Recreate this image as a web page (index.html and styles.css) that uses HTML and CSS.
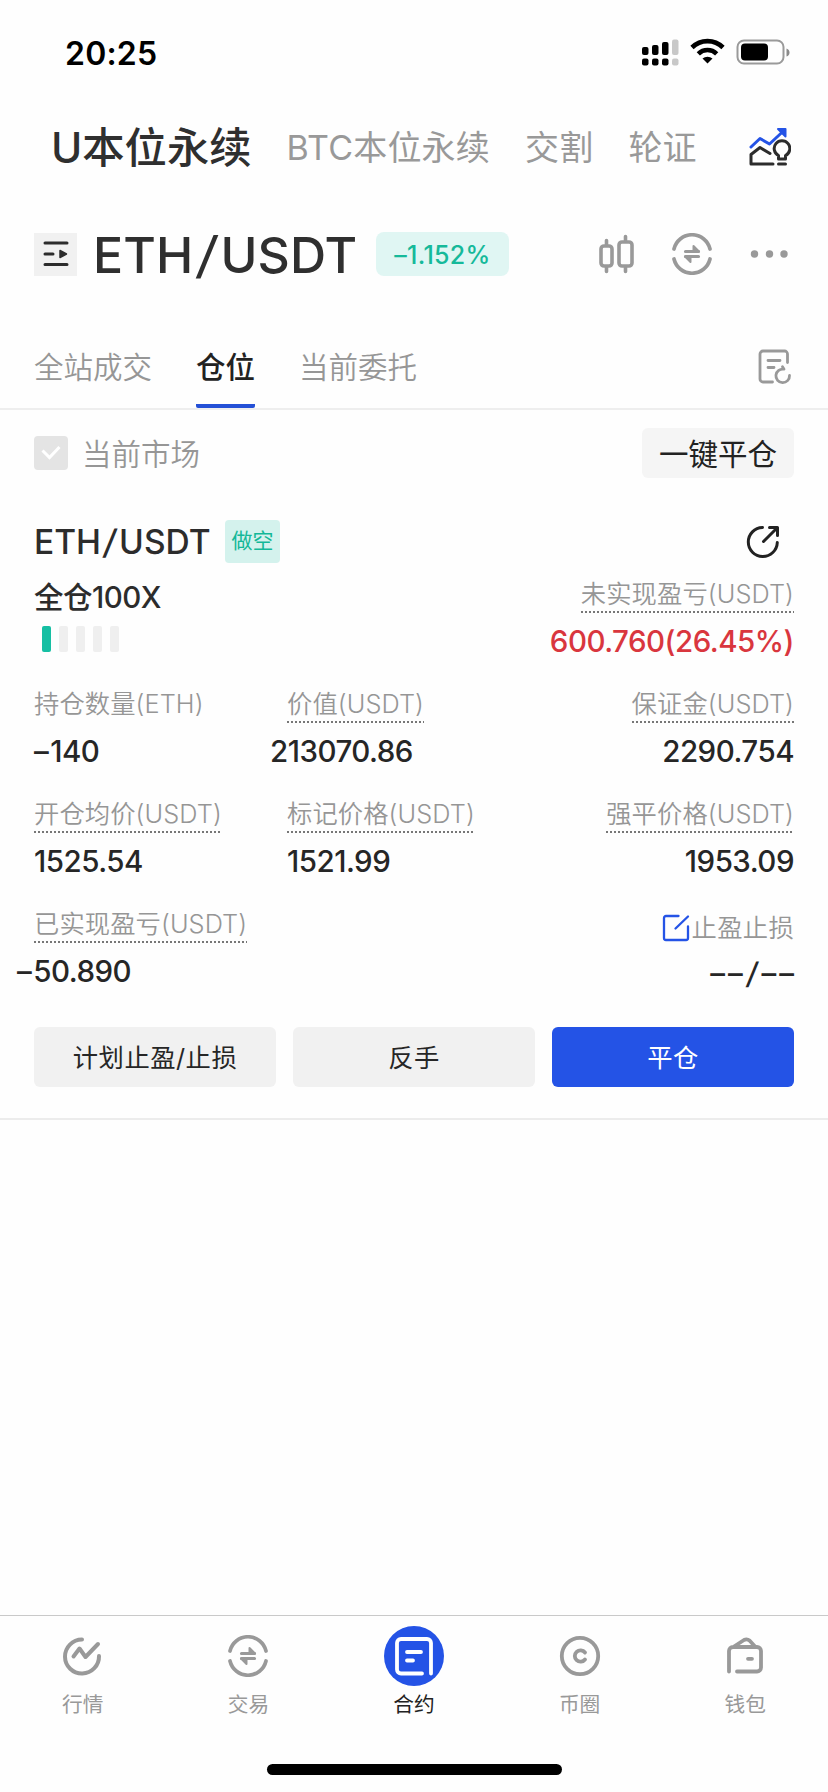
FILE: index.html
```html
<!DOCTYPE html>
<html lang="zh-CN">
<head>
<meta charset="utf-8">
<title>ETH/USDT 合约</title>
<link rel="stylesheet" href="styles.css">
</head>
<body>
<div class="screen">
  <header class="status">
    <span class="status-time">20:25</span>
    <svg class="status-icons" width="148" height="28" viewBox="0 0 148 28">
      <g fill="#000"><rect x="0" y="9" width="6.500" height="8" rx="2"/><rect x="10" y="7" width="6.500" height="10" rx="2"/><rect x="20" y="4" width="6.500" height="13" rx="2"/><rect x="0" y="20.500" width="6.500" height="7" rx="2"/><rect x="10" y="20.500" width="6.500" height="7" rx="2"/><rect x="20" y="20.500" width="6.500" height="7" rx="2"/></g>
      <g fill="#c8c8c8"><rect x="30" y="1.500" width="6.500" height="15.500" rx="2"/><rect x="30" y="20.500" width="6.500" height="7" rx="2"/></g>
      <g fill="none" stroke="#000" stroke-width="4.600"><path d="M50 9.500a22 22 0 0 1 31 0"/><path d="M56.300 15.800a13.200 13.200 0 0 1 18.400 0"/></g>
      <path d="M60.500 20.600a7.500 7.500 0 0 1 10 0L65.500 25.600z"/>
      <rect x="95.500" y="2.500" width="46" height="23" rx="6.500" fill="none" stroke="#9a9a9a" stroke-width="2"/>
      <rect x="99" y="5.500" width="27" height="17" rx="4"/>
      <path d="M144.500 10.500q3 1 3 4t-3 4z" fill="#8a8a8a"/>
    </svg>
  </header>

  <nav class="markets">
    <span class="market market-on">U本位永续</span>
    <span class="market">BTC本位永续</span>
    <span class="market">交割</span>
    <span class="market">轮证</span>
    <svg class="market-icon" width="42" height="40" viewBox="0 0 42 40" fill="none" stroke-width="3" stroke-linecap="round" stroke-linejoin="round">
      <path d="M2 20 11 11.500 20.500 17 35 3.500" stroke="#2453e6"/><path d="M29 2h7.500v7.500z" stroke="#2453e6" stroke-width="2" fill="#2453e6"/>
      <path d="M24 37H2V27.500L11 20.500 21 26.500" stroke="#2c2c2c"/>
      <path d="M29.500 32v-3.500a7.800 7.800 0 1 1 7 0V32zM29.500 37h7" stroke="#2c2c2c"/>
    </svg>
  </nav>

  <section class="pair">
    <div class="pair-menu">
      <svg width="26" height="26" viewBox="0 0 26 26" fill="none" stroke="#2c2c2c" stroke-width="3" stroke-linecap="round"><path d="M2 2h22M2 13h8M2 23.500h22"/><path d="M17 9.500v7l6.500-3.500z" fill="#2c2c2c" stroke-width="1.500" stroke-linejoin="round"/></svg>
    </div>
    <h1 class="pair-name">ETH<span class="slash">/</span>USDT</h1>
    <span class="pair-change">–1.152%</span>
    <div class="pair-tools">
      <svg width="35" height="40" viewBox="0 0 35 40" fill="none" stroke="#999" stroke-width="3.600" stroke-linecap="round"><rect x="2" y="12" width="11" height="20" rx="3"/><rect x="20" y="8" width="13" height="24" rx="3"/><path d="M7.500 6.500v4M7.500 33v4.500M26.500 2.500v4M26.500 33v4.500"/></svg>
      <svg width="40" height="42" viewBox="0 0 40 42"><use href="#swap"/></svg>
      <svg width="38" height="10" viewBox="0 0 38 10" fill="#999"><circle cx="4.500" cy="5" r="3.700"/><circle cx="19.500" cy="5" r="3.700"/><circle cx="34" cy="5" r="3.700"/></svg>
    </div>
  </section>

  <nav class="tabs">
    <span class="tab">全站成交</span>
    <span class="tab tab-on">仓位</span>
    <span class="tab">当前委托</span>
    <svg class="tabs-icon" width="34" height="36" viewBox="0 0 34 36" fill="none" stroke="#999" stroke-width="2.800" stroke-linecap="round" stroke-linejoin="round"><path d="M29.500 13.500V5a3 3 0 0 0-3-3H5a3 3 0 0 0-3 3v25a3 3 0 0 0 3 3h9.500M10 11.500h12M10 18.500h6"/><path d="M31.500 26.500a6.800 6.800 0 1 1-5.500-6.300l-1.500-2.500"/></svg>
  </nav>

  <section class="filter">
    <span class="check"><svg width="20" height="16" viewBox="0 0 20 16" fill="none" stroke="#fff" stroke-width="3"><path d="M1.500 5.500 8.500 12.500 18.500 2"/></svg></span>
    <span class="filter-label">当前市场</span>
    <button class="close-all">一键平仓</button>
  </section>

  <section class="position">
    <div class="pos-head">
      <span class="pos-name">ETH<span class="slash">/</span>USDT</span>
      <span class="side">做空</span>
      <svg class="share" width="34" height="34" viewBox="0 0 34 34" fill="none" stroke="#222" stroke-width="3" stroke-linecap="round" stroke-linejoin="round"><path d="M16.500 2.500A14.500 14.500 0 1 0 31.300 17.500M17.500 16.500 30 4M23.500 2.500h8v8"/></svg>
    </div>
    <div class="summary">
      <div class="lever-block">
        <div class="lever">全仓100X</div>
        <div class="risk"><i class="bar bar-on"></i><i class="bar"></i><i class="bar"></i><i class="bar"></i><i class="bar"></i></div>
      </div>
      <div class="cell end"><span class="label dotted">未实现盈亏(USDT)</span><span class="value loss">600.760(26.45%)</span></div>
    </div>
    <div class="grid">
      <div class="cell"><span class="label">持仓数量(ETH)</span><span class="value"><span class="minus">–</span>140</span></div>
      <div class="cell"><span class="label dotted">价值(USDT)</span><span class="value outdent">213070.86</span></div>
      <div class="cell end"><span class="label dotted">保证金(USDT)</span><span class="value">2290.754</span></div>
      <div class="cell"><span class="label dotted">开仓均价(USDT)</span><span class="value">1525.54</span></div>
      <div class="cell"><span class="label dotted">标记价格(USDT)</span><span class="value">1521.99</span></div>
      <div class="cell end"><span class="label dotted">强平价格(USDT)</span><span class="value">1953.09</span></div>
      <div class="cell"><span class="label dotted">已实现盈亏(USDT)</span><span class="value outdent"><span class="minus">–</span>50.890</span></div>
      <div class="cell"></div>
      <div class="cell end stop">
        <span class="label stop-label"><svg width="28" height="28" viewBox="0 0 28 28" fill="none" stroke="#2453e6" stroke-width="2.300" stroke-linecap="round" stroke-linejoin="round"><path d="M16.500 2H4a2 2 0 0 0-2 2v20a2 2 0 0 0 2 2h20a2 2 0 0 0 2-2V12.500M13.500 14.500 26 2.500"/></svg>止盈止损</span>
        <span class="value dashes">––<span class="slash">/</span>––</span>
      </div>
    </div>
    <div class="actions">
      <button class="action">计划止盈/止损</button>
      <button class="action">反手</button>
      <button class="action action-main">平仓</button>
    </div>
  </section>

  <nav class="dock">
    <div class="dock-item"><span class="dock-icon"><svg width="42" height="42" viewBox="1.500 0 42 42" fill="none" stroke="#999" stroke-width="4" stroke-linecap="round" stroke-linejoin="round" overflow="visible"><path d="M21.500 4.500A17 17 0 1 0 38.500 21M13 21.500l6-8L25 22 37.500 9"/></svg></span>行情</div>
    <div class="dock-item"><span class="dock-icon"><svg width="40" height="42" viewBox="0 0 40 42"><g id="swap" fill="none" stroke="#999" stroke-width="3.700" stroke-linecap="round"><path d="M2 16a18.500 18.500 0 0 1 36 0M2 26a18.500 18.500 0 0 0 36 0"/><path d="M13.500 18.500h13M13.500 23.500h13" stroke-width="3.200"/><path d="M21.500 13 27 18.500h-5.500zM18.500 29 13 23.500h5.500z" fill="#999" stroke-width="2" stroke-linejoin="round"/></g></svg></span>交易</div>
    <div class="dock-item dock-on"><span class="dock-icon dock-disc"><svg width="40" height="40" viewBox="0 0 40 40" fill="none" stroke="#fff" stroke-width="3.800" stroke-linecap="round" stroke-linejoin="round"><path d="M28 37.500H7a4 4 0 0 1-4-4V7a4 4 0 0 1 4-4h26a4 4 0 0 1 4 4v30.500M13 16h14M13 24.500h6"/></svg></span>合约</div>
    <div class="dock-item"><span class="dock-icon"><svg width="42" height="42" viewBox="0 0 42 42" fill="none" stroke="#999" stroke-width="3.800" stroke-linecap="round"><circle cx="21" cy="21" r="18.200"/><path d="M26 17.500a5.700 5.700 0 1 0 0 7"/></svg></span>币圈</div>
    <div class="dock-item"><span class="dock-icon"><svg width="38" height="40" viewBox="0 0 38 40" fill="none" stroke="#999" stroke-width="3.800" stroke-linecap="round" stroke-linejoin="round"><path d="M3 35.500V15a4 4 0 0 1 4-4h24a4 4 0 0 1 4 4v16.500a4 4 0 0 1-4 4H11M8 10.500 18 4q3-1.500 5.500.500L29 10.500M22 22.800h4"/></svg></span>钱包</div>
  </nav>
  <div class="home"></div>
</div>
</body>
</html>
```

FILE: styles.css
```css
* { box-sizing: border-box; }
body { margin: 0; background: #fff; }
svg { display: block; flex: none; }
button { border: 0; padding: 0; font: inherit; color: inherit; }

.screen {
  display: flex;
  flex-direction: column;
  width: 828px;
  height: 1792px;
  overflow: hidden;
  background: #fefefe;
  color: #2c2c2c;
  font-family: Inter, "Noto Sans CJK SC", sans-serif;
  white-space: nowrap;
}

/* status bar */
.status { display: flex; align-items: center; height: 106px; padding: 0 38px 0 65px; }
.status-time { font-size: 32px; font-weight: 600; color: #000; letter-spacing: 0.2px; }
.status-icons { margin: 0 0 2px auto; }

/* market switcher */
.markets { display: flex; align-items: center; height: 84px; padding: 0 37px 0 51px; gap: 35px; color: #999; }
.market { font-size: 34px; line-height: 84px; letter-spacing: 0.2px; }
.market-on { font-size: 42.3px; font-weight: 500; color: #2f2f2f; letter-spacing: 0; }
.market-icon { margin: 0 0 2px auto; }

/* pair header */
.pair { display: flex; align-items: center; height: 128px; padding: 0 40px 0 34px; }
.pair-menu { display: flex; align-items: center; justify-content: center; width: 43px; height: 43px; background: #f1f1f1; }
.pair-name { margin: 2px 0 0 16px; width: 266px; font-size: 50px; font-weight: 450; letter-spacing: 0.1px; color: #2f2f2f; }
.slash { display: inline-block; margin: 0 0.085em; transform: skewX(-8deg); }
.pair-change { display: flex; align-items: center; justify-content: center; width: 133px; height: 44px; margin-left: 17px; padding-top: 2px; border-radius: 8px; background: #e0f6f3; color: #16b99a; font-size: 25px; font-weight: 450; letter-spacing: 0.3px; }
.pair-tools { display: flex; align-items: center; gap: 38px; margin-left: auto; }

/* content tabs */
.tabs { display: flex; align-items: center; height: 92px; padding: 0 36px 0 34px; gap: 44px; border-bottom: 2px solid #eee; color: #969696; font-size: 29.5px; font-weight: 350; }
.tab { height: 90px; line-height: 98px; }
.tab-on { color: #222; font-weight: 500; border-bottom: 4px solid #2450d6; border-radius: 2px; }
.tabs-icon { margin: 8px 0 0 auto; }

/* filter row */
.filter { display: flex; align-items: center; height: 86px; padding: 0 34px; font-size: 29.500px; }
.check { display: flex; align-items: center; justify-content: center; width: 34px; height: 34px; border-radius: 4px; background: #e4e4e4; }
.filter-label { margin: -2px 0 0 14px; color: #969696; font-weight: 350; }
.close-all { width: 152px; height: 50px; margin-left: auto; padding-bottom: 2px; border-radius: 6px; background: #f5f5f5; color: #222; }

/* position card */
.position { height: 624px; padding: 0 34px; border-bottom: 2px solid #ececec; }
.pos-head { display: flex; align-items: center; height: 92px; }
.pos-name { width: 179px; font-size: 33.500px; font-weight: 450; letter-spacing: 0; }
.side { width: 55px; height: 43px; margin: -1px 0 0 12px; border-radius: 4px; background: #d4f2ed; color: #14b898; font-size: 21px; line-height: 42px; text-align: center; }
.share { margin-left: auto; margin-right: 14px; }
.summary { display: flex; justify-content: space-between; height: 93px; margin-top: -10px; }
.lever { height: 39px; font-size: 29.500px; font-weight: 500; line-height: 38px; letter-spacing: -0.5px; }
.risk { display: flex; gap: 8px; padding: 9px 8px; }
.bar { width: 9px; height: 26px; border-radius: 2px; background: #efefef; }
.bar-on { background: #16bfa3; }
.grid { display: grid; grid-template-columns: 253px 253px 1fr; grid-auto-rows: 110px; padding-top: 17px; }
.cell { display: flex; flex-direction: column; align-items: flex-start; }
.end { align-items: flex-end; }
.label { height: 35px; color: #969696; font-size: 25.300px; font-weight: 350; line-height: 32px; letter-spacing: 0.1px; }
.dotted { background: repeating-linear-gradient(90deg, #777 0 2px, transparent 2px 4px) bottom / 100% 2px no-repeat; }
.value { margin-top: 10px; height: 38px; color: #262626; font-size: 29.500px; font-weight: 480; line-height: 37px; letter-spacing: -0.5px; }
.minus { margin-right: 2px; }
.outdent { margin-left: -17px; }
.loss { color: #d9363e; }
.stop { padding-top: 2px; }
.stop-label { display: flex; align-items: center; gap: 2px; letter-spacing: 0.300px; }
.dashes { margin: 10px -3px 0 0; letter-spacing: 3px; }
.dashes .slash { margin: 0 0.03em; }
.actions { display: flex; gap: 17px; margin-top: 9px; }
.action { flex: 1; height: 60px; padding-bottom: 2px; border-radius: 6px; background: #f1f1f1; color: #262626; font-size: 25.300px; letter-spacing: 0.500px; }
.action-main { background: #2453e6; color: #fff; }

/* bottom dock */
.dock { display: flex; height: 149px; margin-top: auto; padding-top: 10px; border-top: 1px solid #c9c9c9; color: #999; font-size: 20.700px; }
.dock-item { display: flex; flex: 1; flex-direction: column; align-items: center; gap: 2px; }
.dock-icon { display: flex; align-items: center; justify-content: center; width: 60px; height: 60px; }
.dock-disc { border-radius: 50%; background: #2453e6; }
.dock-on { color: #222; }
.home { flex: none; width: 295px; height: 11px; margin: 0 auto 17px; border-radius: 6px; background: #000; }
```
